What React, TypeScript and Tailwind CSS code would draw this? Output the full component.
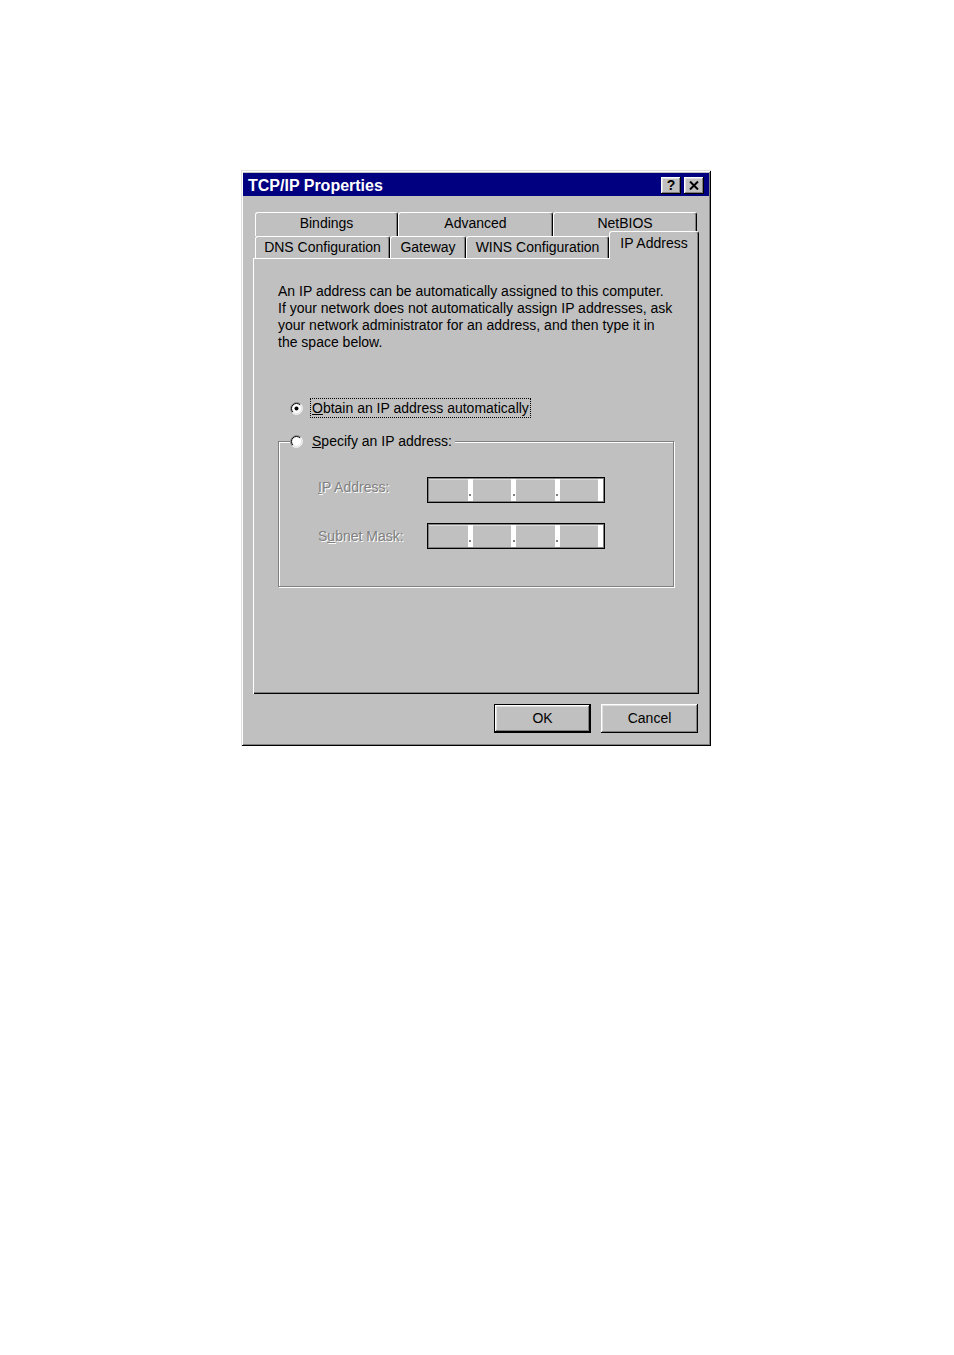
import React from "react";

// Win95-style TCP/IP Properties dialog, IP Address tab selected
const RAISED =
  "shadow-[inset_-1px_-1px_0_#000,inset_1px_1px_0_#fff,inset_-2px_-2px_0_#808080,inset_2px_2px_0_#dfdfdf]";

const BACK_ROW = [
  { label: "Bindings", w: "w-[143px]" },
  { label: "Advanced", w: "w-[155px]" },
  { label: "NetBIOS", w: "w-[144px]" },
] as const;

const FRONT_ROW = [
  { label: "DNS Configuration", w: "w-[135px]" },
  { label: "Gateway", w: "w-[76px]" },
  { label: "WINS Configuration", w: "w-[143px]" },
] as const;

function Tab({ label, className }: { label: string; className: string }) {
  return (
    <div
      className={`flex justify-center rounded-t-[3px] border-l border-t border-r border-white border-r-black bg-[#c0c0c0] shadow-[inset_-1px_0_0_#808080] ${className}`}
    >
      {label}
    </div>
  );
}

function Radio({ checked }: { checked?: boolean }) {
  return (
    <svg width="13" height="13" viewBox="0 0 13 13" className="shrink-0">
      <circle cx="6.5" cy="6.5" r="5.5" fill="#fff" />
      <path d="M2.26 10.74 A6 6 0 0 1 10.74 2.26" stroke="#808080" fill="none" />
      <path d="M10.74 2.26 A6 6 0 0 1 2.26 10.74" stroke="#fff" fill="none" />
      <path d="M2.96 10.04 A5 5 0 0 1 10.04 2.96" stroke="#000" fill="none" />
      <path d="M10.04 2.96 A5 5 0 0 1 2.96 10.04" stroke="#dfdfdf" fill="none" />
      {checked && <circle cx="6.5" cy="6.5" r="2" fill="#000" />}
    </svg>
  );
}

function IpField() {
  return (
    <div className="flex h-[26px] w-[178px] border border-black p-[1px] shadow-[inset_1px_1px_0_#808080,inset_-1px_-1px_0_#808080]">
      {[0, 1, 2, 3].map((i) => (
        <React.Fragment key={i}>
          <div className="flex-1 border-t border-[#dcdcdc]" />
          <div className="flex w-[5px] items-end justify-center bg-white pb-[5px]">
            {i < 3 && <div className="h-[2px] w-[2px] bg-[#808080]" />}
          </div>
        </React.Fragment>
      ))}
    </div>
  );
}

const DISABLED = "text-[#808080] [text-shadow:1px_1px_0_#fff]";

export default function App() {
  return (
    <div className="min-h-[1355px] bg-white pl-[241px] pt-[170px] font-['Liberation_Sans',Arial,sans-serif] text-[14px] leading-[17px] text-black">
      <div className="flex h-[576px] w-[470px] flex-col bg-[#c0c0c0] px-[2px] pt-[3px] shadow-[inset_1px_1px_0_#dfdfdf,inset_-1px_-1px_0_#000,inset_2px_2px_0_#fff,inset_-2px_-2px_0_#808080]">
        {/* title bar */}
        <div className="flex h-[23px] items-center bg-[#000080] pl-[5px] pr-[5px] pt-[1px]">
          <span className="text-[16px] font-bold text-white">TCP/IP Properties</span>
          <div className="ml-auto flex gap-[3px]">
            <div
              className={`flex h-[17px] w-[20px] items-center justify-center bg-[#c0c0c0] text-[14px] font-bold leading-none ${RAISED}`}
            >
              ?
            </div>
            <div className={`flex h-[17px] w-[20px] items-center justify-center bg-[#c0c0c0] ${RAISED}`}>
              <svg width="10" height="9" viewBox="0 0 10 9">
                <path d="M1 0.5 L9 8.5 M9 0.5 L1 8.5" stroke="#000" strokeWidth="2" />
              </svg>
            </div>
          </div>
        </div>

        {/* tabs */}
        <div className="mx-[10px] mt-[16px]">
          <div className="flex h-[24px] pl-[2px]">
            {BACK_ROW.map((t) => (
              <Tab key={t.label} label={t.label} className={`${t.w} h-[24px] pt-[2px]`} />
            ))}
          </div>
          <div className="flex h-[22px] items-end pl-[2px]">
            {FRONT_ROW.map((t) => (
              <Tab key={t.label} label={t.label} className={`${t.w} h-[22px] pt-[2px]`} />
            ))}
            <Tab label="IP Address" className="relative z-10 -mb-px h-[28px] w-[90px] pt-[3px]" />
          </div>

          {/* page */}
          <div className="h-[436px] pl-[25px] pt-[25px] shadow-[inset_1px_1px_0_#fff,inset_-1px_-1px_0_#000,inset_-2px_-2px_0_#808080]">
            <p>
              An IP address can be automatically assigned to this computer.
              <br />
              If your network does not automatically assign IP addresses, ask
              <br />
              your network administrator for an address, and then type it in
              <br />
              the space below.
            </p>

            <div className="ml-[12px] mt-[47px] flex h-[20px] items-center gap-[7px]">
              <Radio checked />
              <span className="border border-dotted border-black px-[1px] leading-[18px]">
                <span className="underline">O</span>btain an IP address automatically
              </span>
            </div>

            <fieldset className="mt-[14px] w-[396px] border border-[#808080] pb-[37px] shadow-[1px_1px_0_#fff,inset_1px_1px_0_#fff]">
              <legend className="ml-[11px] flex items-center gap-[7px] bg-[#c0c0c0] pr-[1px]">
                <Radio />
                <span className="border border-transparent px-[1px]">
                  <span className="underline">S</span>pecify an IP address:
                </span>
              </legend>
              <div className="mt-[26px] flex flex-col gap-[20px]">
                <div className="flex items-center">
                  <span className={`w-[148px] pb-[5px] pl-[39px] ${DISABLED}`}>
                    <span className="underline">I</span>P Address:
                  </span>
                  <IpField />
                </div>
                <div className="flex items-center">
                  <span className={`w-[148px] pl-[39px] ${DISABLED}`}>
                    S<span className="underline">u</span>bnet Mask:
                  </span>
                  <IpField />
                </div>
              </div>
            </fieldset>
          </div>
        </div>

        {/* buttons */}
        <div className="mx-[10px] mt-[10px] flex justify-end gap-[10px] pr-[1px]">
          <button className={`h-[29px] w-[97px] border border-black bg-[#c0c0c0] ${RAISED}`}>OK</button>
          <button className={`h-[29px] w-[97px] bg-[#c0c0c0] ${RAISED}`}>Cancel</button>
        </div>
      </div>
    </div>
  );
}
